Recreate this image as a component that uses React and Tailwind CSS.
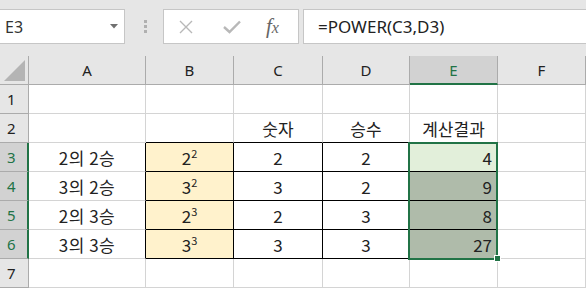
import React from "react";

const font = { fontFamily: '"Noto Sans CJK KR", "Noto Sans", sans-serif' };

function Cell({ children, className = "" }) {
  return (
    <div className={`flex items-center border-r border-b ${className}`}>{children}</div>
  );
}

function Sup({ b, e }) {
  return (
    <span>
      {b}
      <span className="text-[11px] relative top-[-7px]">{e}</span>
    </span>
  );
}

export default function App() {
  const cols = ["A", "B", "C", "D", "E", "F"];
  const rowsData = [
    ["2의 2승", <Sup b="2" e="2" />, "2", "2", "4"],
    ["3의 2승", <Sup b="3" e="2" />, "3", "2", "9"],
    ["2의 3승", <Sup b="2" e="3" />, "2", "3", "8"],
    ["3의 3승", <Sup b="3" e="3" />, "3", "3", "27"],
  ];
  const gl = "border-[#d4d4d4]";
  return (
    <div className="w-[586px] h-[289px] overflow-hidden bg-white text-[#222]" style={font}>
      {/* formula bar */}
      <div className="h-[56px] bg-[#e6e6e6] flex items-start pt-[9px]">
        <div className="ml-[-1px] w-[126px] h-[35px] bg-white border border-[#c6c6c6] flex items-center justify-between pl-[5px] pr-[6px]">
          <span className="text-[16px] text-[#333]" style={{ fontFamily: '"Noto Sans", sans-serif' }}>E3</span>
          <svg width="8" height="5" viewBox="0 0 8 5"><path d="M0 0 H8 L4 4.5 Z" fill="#707070" /></svg>
        </div>
        <div className="w-[38px] h-[35px] flex flex-col items-center justify-center gap-[2px] pl-[2px]">
          <div className="w-[3px] h-[3px] bg-[#b0b0b0]" />
          <div className="w-[3px] h-[3px] bg-[#b0b0b0]" />
          <div className="w-[3px] h-[3px] bg-[#b0b0b0]" />
        </div>
        <div className="w-[136px] h-[35px] bg-white border border-[#c6c6c6] flex items-center">
          <svg className="ml-[14px]" width="16" height="16" viewBox="0 0 16 16">
            <path d="M2 2 L14 14 M14 2 L2 14" stroke="#b8b8b8" strokeWidth="1.4" />
          </svg>
          <svg className="ml-[29px]" width="18" height="14" viewBox="0 0 18 14">
            <path d="M1 7 L6.5 12 L17 1.5" stroke="#b8b8b8" strokeWidth="2.4" fill="none" />
          </svg>
          <span className="ml-[25px] text-[21px] leading-none italic text-[#666]" style={{ fontFamily: '"Liberation Serif", serif' }}>
            f<span className="text-[16px]">x</span>
          </span>
        </div>
        <div className="ml-[4px] flex-1 mr-[-1px] h-[35px] bg-white border border-[#c6c6c6] flex items-center pl-[14px]">
          <span className="text-[17px] text-[#222]" style={{ fontFamily: '"Noto Sans", sans-serif' }}>=POWER(C3,D3)</span>
        </div>
      </div>

      {/* sheet */}
      <div className="relative">
        <div className="grid grid-cols-[29px_117px_88px_89px_87px_88px_1fr] auto-rows-[29px] text-[17px]">
          {/* header row */}
          <div className="relative bg-[#e6e6e6] border-r border-b border-[#ababab]">
            <svg className="absolute right-[3px] bottom-[3px]" width="21" height="21" viewBox="0 0 21 21">
              <path d="M21 0 V21 H0 Z" fill="#b4b4b4" />
            </svg>
          </div>
          {cols.map((c) =>
            c === "E" ? (
              <div key={c} className="flex items-center justify-center bg-[#d2d2d2] border-r border-[#ababab] border-b-2 border-b-[#217346] text-[#217346] text-[15px] pt-[1px]" style={{ fontFamily: '"Noto Sans", sans-serif' }}>
                {c}
              </div>
            ) : (
              <div key={c} className="flex items-center justify-center bg-[#e6e6e6] border-r border-b border-[#ababab] text-[15px]" style={{ fontFamily: '"Noto Sans", sans-serif' }}>
                {c}
              </div>
            )
          )}

          {/* row 1 */}
          <div className="flex items-center pl-[7px] bg-[#e6e6e6] border-r border-b border-[#ababab] text-[15px]" style={{ fontFamily: '"Noto Sans", sans-serif' }}>1</div>
          {cols.map((c) => (
            <Cell key={c} className={gl} />
          ))}

          {/* row 2 */}
          <div className="flex items-center pl-[7px] bg-[#e6e6e6] border-r border-b border-[#ababab] text-[15px]" style={{ fontFamily: '"Noto Sans", sans-serif' }}>2</div>
          <Cell className={gl} />
          <Cell className="border-r-[#d4d4d4] border-b-black" />
          <Cell className="border-r-[#d4d4d4] border-b-black justify-center pt-[2px]">숫자</Cell>
          <Cell className="border-r-[#d4d4d4] border-b-black justify-center pt-[2px]">승수</Cell>
          <Cell className="border-r-[#d4d4d4] border-b-black justify-center pt-[2px]">계산결과</Cell>
          <Cell className={gl} />

          {rowsData.map((r, i) => (
            <React.Fragment key={i}>
              <div className="flex items-center pl-[7px] bg-[#d2d2d2] border-r-2 border-r-[#217346] border-b border-b-[#ababab] text-[15px] text-[#217346]" style={{ fontFamily: '"Noto Sans", sans-serif' }}>
                {i + 3}
              </div>
              <Cell className="border-r-black border-b-[#d4d4d4] justify-center pt-[2px] tracking-[0.5px]">{r[0]}</Cell>
              <Cell className="border-black bg-[#fff2cc] justify-center pt-[2px]">{r[1]}</Cell>
              <Cell className="border-black justify-center pt-[2px]">{r[2]}</Cell>
              <Cell className="border-black justify-center pt-[2px]">{r[3]}</Cell>
              <Cell className={`border-black justify-end pr-[5px] pt-[2px] ${i === 0 ? "bg-[#e2efda]" : "bg-[#afbbaa]"}`}>{r[4]}</Cell>
              <Cell className={gl} />
            </React.Fragment>
          ))}

          {/* row 7 */}
          <div className="flex items-center pl-[7px] bg-[#e6e6e6] border-r border-b border-[#ababab] text-[15px]" style={{ fontFamily: '"Noto Sans", sans-serif' }}>7</div>
          {cols.map((c) => (
            <Cell key={c} className={gl} />
          ))}
        </div>

        {/* selection */}
        <div className="absolute left-[408px] top-[86px] w-[90px] h-[118px] border-2 border-[#217346] pointer-events-none" />
        <div className="absolute left-[494px] top-[199px] w-[7px] h-[7px] bg-[#217346] border border-white" />
      </div>
    </div>
  );
}
